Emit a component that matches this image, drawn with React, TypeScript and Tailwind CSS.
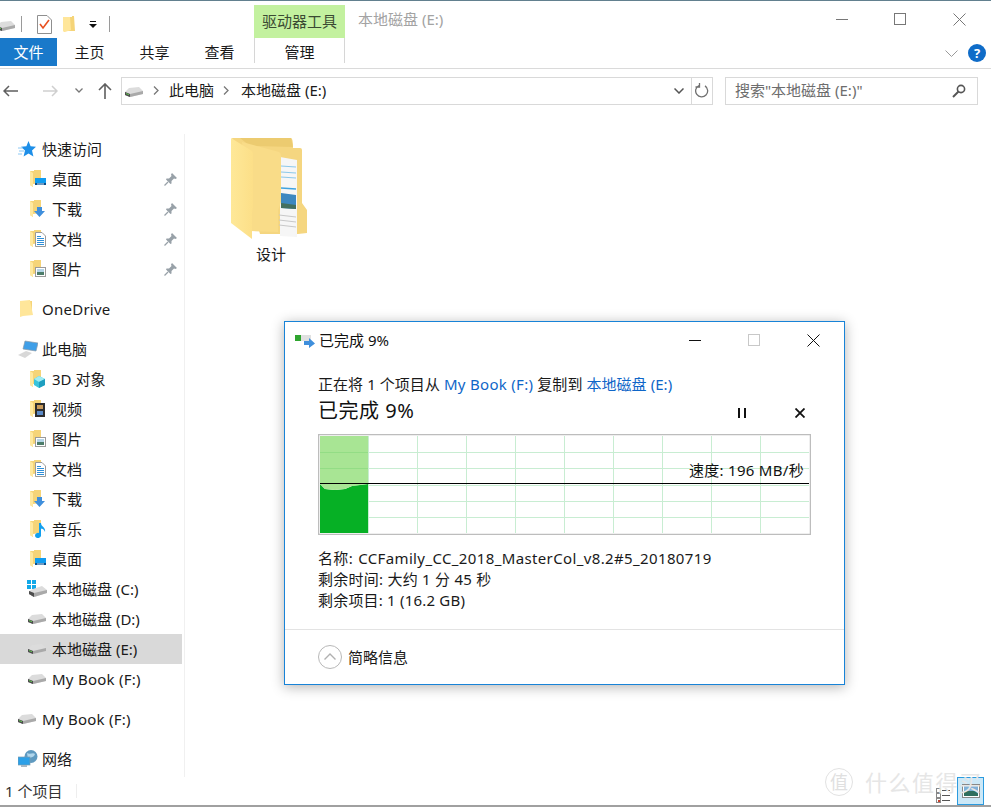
import React from "react";

const HDD = ({ className = "" }: { className?: string }) => (
  <svg width="18" height="12" viewBox="0 0 18 12" className={`shrink-0 ${className}`}>
    <path d="M4 2 L14 1 L18 5 L18 8 L5 11 L0 9 L0 6 Z" fill="#dcdcdc" />
    <path d="M0 6 L5 8 L18 5 L18 8 L5 11 L0 9 Z" fill="#a9a9a9" />
    <path d="M0 6 L5 8 L5 11 L0 9 Z" fill="#4d4d4d" />
    <path d="M1 7.5 L4 8.7" stroke="#5fbf4f" strokeWidth="1" />
  </svg>
);

const FolderBase = ({ children }: { children?: React.ReactNode }) => (
  <svg width="18" height="18" viewBox="0 0 18 18" className="shrink-0">
    <path d="M0 1 L4 1 L4 0 L11 0 L11 13 L3 14 L3 17 L0 15 Z" fill="#f5d478" />
    <path d="M0 1 L3 3 L3 17 L0 15 Z" fill="#ffe9a0" />
    {children}
  </svg>
);

const Desktop = () => (
  <FolderBase>
    <rect x="5" y="8" width="11" height="7" fill="#0f9cf0" />
    <rect x="5" y="13" width="11" height="2" fill="#0a4d8a" />
    <rect x="7" y="13.5" width="7" height="1" fill="#d0e8f8" />
  </FolderBase>
);
const Download = () => (
  <FolderBase>
    <path d="M7 7 H12 V11 H15 L9.5 17 L4 11 H7 Z" fill="#3f8fdc" />
  </FolderBase>
);
const Docs = () => (
  <FolderBase>
    <path d="M5.5 2.5 H12 L15.5 6 V16.5 H5.5 Z" fill="#fff" stroke="#9a9a9a" strokeWidth="1" />
    <path d="M7 6.5 H11 M7 8.5 H14 M7 10.5 H14 M7 12.5 H14 M7 14.5 H14" stroke="#2f8fd8" strokeWidth="1" />
  </FolderBase>
);
const Pics = () => (
  <FolderBase>
    <rect x="5.5" y="7.5" width="10" height="9" fill="#fff" stroke="#9a9a9a" />
    <rect x="7" y="9" width="7" height="3" fill="#b5d5e8" />
    <rect x="7" y="12" width="7" height="3" fill="#4d7d6a" />
  </FolderBase>
);
const Obj3D = () => (
  <FolderBase>
    <path d="M9 6 L15 9 L15 15 L9 18 L4 15 L4 9 Z" fill="#39c4dc" />
    <path d="M9 6 L15 9 L9 12 L4 9 Z" fill="#a0ecf4" />
    <path d="M9 12 L15 9 L15 15 L9 18 Z" fill="#1f9fc0" />
  </FolderBase>
);
const Video = () => (
  <FolderBase>
    <rect x="5" y="3" width="10" height="14" fill="#2d2d2d" />
    <rect x="7" y="5" width="6" height="4" fill="#c89a5a" />
    <rect x="7" y="11" width="6" height="4" fill="#5a8ac8" />
  </FolderBase>
);
const Music = () => (
  <FolderBase>
    <path d="M9 3 L11 3 C11 7 16 7 15 12 C14 9 12.5 9 11 8.5 L11 15 A3 2.6 0 1 1 9 13 Z" fill="#12a0ee" />
  </FolderBase>
);

const Pin = () => (
  <svg width="13" height="13" viewBox="0 0 13 13">
    <path d="M8 0 L13 5 L11.5 6 L10 5.5 L7.5 8 L7.5 10.5 L6.5 11 L2 6.5 L2.5 5.5 L5 5.5 L7.5 3 L7 1.5 Z" fill="#98a1a8" />
    <path d="M4 9 L0.5 12.5" stroke="#98a1a8" strokeWidth="1.3" />
  </svg>
);

const Star = () => (
  <svg width="18" height="17" viewBox="0 0 18 17">
    <path d="M10.5 0 L12.6 5.3 L18 5.8 L14 9.6 L15.4 15.5 L10.5 12.5 L5.6 15.5 L7 9.6 L3 5.8 L8.4 5.3 Z" fill="#1e8fe8" />
    <path d="M0 7 H5 M1 10 H6 M0 13 H4" stroke="#8cc8f4" strokeWidth="1" />
  </svg>
);
const OneDriveFolder = () => (
  <svg width="14" height="18" viewBox="0 0 14 18" className="ml-[2px] shrink-0">
    <path d="M2 1 L12 1 L12 14 L2 15 Z" fill="#f5d478" />
    <path d="M0 1 L10 0 L13 15 L3 16 L0 17 Z" fill="#ffe69a" />
  </svg>
);
const Computer = () => (
  <svg width="20" height="18" viewBox="0 0 20 18" className="shrink-0">
    <path d="M7 1 L20 3 L18 11 L5 9 Z" fill="#3f9fe8" stroke="#8a9aa8" strokeWidth="0.7" />
    <path d="M0 15 L8 11 L14 13 L7 18 Z" fill="#d8d8d8" />
  </svg>
);
const Network = () => (
  <svg width="20" height="18" viewBox="0 0 20 18" className="shrink-0">
    <circle cx="13" cy="6.5" r="6.5" fill="#5f9ac0" />
    <path d="M9 3 C12 5 15 2 17 4 C16 8 12 7 10 9 Z" fill="#b0d6ec" />
    <rect x="0" y="7" width="12" height="8" fill="#2ca0e8" stroke="#7a9ab0" strokeWidth="0.7" />
    <rect x="3" y="15" width="6" height="2" fill="#a8b8c4" />
  </svg>
);
const WinHDD = () => (
  <svg width="20" height="18" viewBox="0 0 20 18" className="-ml-[3px] shrink-0">
    <rect x="0" y="0" width="4" height="4" fill="#12a8e8" />
    <rect x="5" y="0" width="4" height="4" fill="#12a8e8" />
    <rect x="0" y="5" width="4" height="4" fill="#12a8e8" />
    <rect x="5" y="5" width="4" height="4" fill="#12a8e8" />
    <path d="M6 9 L15 6 L20 10 L20 13 L7 17 L2 14 L2 11 Z" fill="#dcdcdc" />
    <path d="M2 11 L7 13 L20 10 L20 13 L7 17 L2 14 Z" fill="#a9a9a9" />
    <path d="M2 11 L7 13 L7 17 L2 14 Z" fill="#4d4d4d" />
  </svg>
);

const Row = ({
  icon,
  label,
  pin,
  level = 1,
  selected,
  latin,
}: {
  icon: React.ReactNode;
  label: string;
  pin?: boolean;
  level?: 0 | 1;
  selected?: boolean;
  latin?: boolean;
}) => (
  <div className={`flex h-[30px] w-[182px] items-center ${selected ? "bg-[#d9d9d9]" : ""}`}>
    <div className={`flex shrink-0 items-center justify-start ${level === 1 ? "ml-[30px] w-[22px]" : "ml-[18px] w-[24px]"}`}>
      {icon}
    </div>
    <span className={`whitespace-nowrap text-[15px] text-[#1a1a1a] ${latin ? "tracking-[0.25px]" : ""}`}>{label}</span>
    {pin && (
      <span className="ml-auto mr-[5px]">
        <Pin />
      </span>
    )}
  </div>
);

const BigFolder = () => (
  <svg width="80" height="104" viewBox="231 136 80 104">
    <defs>
      <linearGradient id="leaf" x1="0" y1="0" x2="1" y2="0">
        <stop offset="0" stopColor="#fee898" />
        <stop offset="1" stopColor="#fcdf88" />
      </linearGradient>
    </defs>
    <path d="M232 138 H291 Q293 138 293 148 H300 Q302 148 302 150 V203 L307 210 V233 L298 234 H260 Z" fill="#f5d680" />
    <path d="M240 138 H291 L293 147 L250 146 Z" fill="#eccb70" />
    <path d="M280 157 L297 160 V237 L280 236 Z" fill="#f6f6f6" />
    <path d="M281 166 L296 167 M281 172 L296 173 M281 177 L296 178" stroke="#8cc8ea" strokeWidth="1" />
    <path d="M281 188 L296 189" stroke="#3fa3e0" strokeWidth="1.4" />
    <path d="M281 193 L296 195 V209 L281 208 Z" fill="#3d88c0" />
    <path d="M281 203 L296 205 V209 L281 208 Z" fill="#44705f" />
    <path d="M279 215 L296 217 M279 220 L296 222 M279 225 L296 227" stroke="#c8c8c8" strokeWidth="1" />
    <path d="M242 142 L279 152 Q281 153 281 156 V202 L278 210 V232 L250 231 Z" fill="#f9dc88" />
    <path d="M231 138 L252 151 Q253 152 253 154 V208 L252 213 V239 L231 223 Z" fill="url(#leaf)" />
  </svg>
);

const links = "text-[#0f66c8]";

const Chart = () => {
  const xs = [368, 417, 466, 515, 564, 613, 662, 711, 760];
  const ys = [452, 468, 485, 501, 517];
  return (
    <svg width="493" height="101" viewBox="318 434 493 101" className="block">
      <rect x="318.5" y="434.5" width="492" height="100" fill="#fff" stroke="#bdbdbd" strokeWidth="1.5" />
      <rect x="320" y="436" width="48.5" height="48" fill="#a8e594" />
      {ys.map((y) => (
        <line key={y} x1="320" x2="809" y1={y + 0.5} y2={y + 0.5} stroke="#c8edd2" />
      ))}
      {xs.map((x) => (
        <line key={x} x1={x + 0.5} x2={x + 0.5} y1="436" y2="533" stroke="#c8edd2" />
      ))}
      <line x1="320" x2="368" y1="452.5" y2="452.5" stroke="#93dd85" />
      <line x1="320" x2="368" y1="468.5" y2="468.5" stroke="#93dd85" />
      <path d="M320 484 L325 489 L335 490 L345 489 L352 486 L360 485 L368 484 V533 H320 Z" fill="#06b025" />
      <path d="M320 484 H368 L360 485 L352 486 L345 489 L335 490 L325 489 Z" fill="#a8e594" />
      <line x1="320" x2="809" y1="483.5" y2="483.5" stroke="#000" />
    </svg>
  );
};

const Dialog = () => (
  <div className="absolute left-[284px] top-[320px] h-[364px] w-[561px] border border-[#1883d7] bg-white shadow-[0_2px_12px_rgba(0,0,0,0.3)]">
    <div className="flex h-[36px] items-center">
      <svg width="20" height="14" viewBox="0 0 20 14" className="ml-[10px] mt-[1px]">
        <rect x="0" y="1" width="16" height="6" fill="#e0e0e0" />
        <rect x="0" y="1" width="6" height="6" fill="#2fa52f" />
        <path d="M9 7 H14 V4 L20 9.5 L14 14 V11 H9 Z" fill="#3f8fdc" />
      </svg>
      <span className="ml-[4px] text-[15px] text-[#111]">已完成 9%</span>
      <div className="ml-auto flex items-center">
        <span className="mr-[47px] h-px w-[12px] bg-[#111]" />
        <span className="mr-[47px] size-[12px] border border-[#c8c8c8]" />
        <svg width="13" height="13" viewBox="0 0 13 13" className="mr-[24px]">
          <path d="M0.5 0.5 L12.5 12.5 M12.5 0.5 L0.5 12.5" stroke="#111" />
        </svg>
      </div>
    </div>
    <div className="px-[33px]">
      <div className="mt-[15px] h-[22px] whitespace-nowrap text-[15px] leading-[22px] tracking-[0.06px] text-[#1a1a1a]">
        正在将 1 个项目从 <span className={`${links} tracking-[0.3px]`}>My Book (F:)</span> 复制到 <span className={links}>本地磁盘 (E:)</span>
      </div>
      <div className="mt-px flex h-[30px] items-center">
        <span className="text-[20px] tracking-[0.5px] text-[#111]">已完成 9%</span>
        <svg width="10" height="10" viewBox="0 0 10 10" className="ml-auto mt-[4px]">
          <path d="M2 0 V10 M8 0 V10" stroke="#111" strokeWidth="2" />
        </svg>
        <svg width="10" height="10" viewBox="0 0 10 10" className="ml-[48px] mr-[6px] mt-[4px]">
          <path d="M0.5 0.5 L9.5 9.5 M9.5 0.5 L0.5 9.5" stroke="#111" strokeWidth="1.8" />
        </svg>
      </div>
      <div className="relative mt-[8px]">
        <Chart />
        <span className="absolute right-[7px] top-[26px] whitespace-nowrap text-[15px] leading-[20px] tracking-[0.3px] text-[#111]">速度: 196 MB/秒</span>
      </div>
      <div className="mt-[13px] whitespace-nowrap text-[15px] leading-[21px] text-[#1a1a1a]">
        <div className="flex tracking-[0.37px]">
          <span>名称:</span>
          <span className="ml-[5px]">CCFamily_CC_2018_MasterCol_v8.2#5_20180719</span>
        </div>
        <div className="tracking-[0.25px]">剩余时间: 大约 1 分 45 秒</div>
        <div className="tracking-[0.2px]">剩余项目: 1 (16.2 GB)</div>
      </div>
    </div>
    <div className="mt-[18px] h-px bg-[#e3e3e3]" />
    <div className="flex h-[54px] items-center pl-[33px]">
      <svg width="24" height="24" viewBox="0 0 24 24">
        <circle cx="12" cy="12" r="11.5" fill="none" stroke="#b8b8b8" />
        <path d="M6.5 14.5 L12 9 L17.5 14.5" fill="none" stroke="#b0b0b0" strokeWidth="1.4" />
      </svg>
      <span className="ml-[6px] text-[15px] text-[#1a1a1a]">简略信息</span>
    </div>
  </div>
);

const Watermark = () => (
  <div className="absolute left-[825px] top-[766px] flex h-[30px] items-center">
    <span className="flex size-[28px] items-center justify-center rounded-full border border-[#e2e2e2] text-[18px] text-[#e0e0e0]">值</span>
    <span className="ml-[12px] whitespace-nowrap text-[22px] tracking-[1.5px] text-[#e6e6e6]">什么值得买</span>
  </div>
);

export default function App() {
  return (
    <div
      className="relative flex h-[807px] w-[991px] flex-col overflow-hidden border-t border-b-2 border-t-[#62808f] border-b-[#a0a0a0] bg-white text-[15px] text-[#1a1a1a]"
      style={{ fontFamily: '"Noto Sans","Noto Sans CJK SC",sans-serif' }}
    >
      {/* title bar */}
      <div className="flex h-[37px] items-start">
        <div className="flex h-[37px] w-[254px] items-center pt-[9px]">
          <HDD className="-ml-[3px] mt-[3px]" />
          <span className="ml-[6px] h-[16px] w-px bg-[#9a9a9a]" />
          <svg width="15" height="19" viewBox="0 0 15 19" className="ml-[15px]">
            <path d="M0.5 0.5 H10 L14.5 5 V18.5 H0.5 Z" fill="#fff" stroke="#8f8f8f" />
            <path d="M3 9 L6 13 L12 5" fill="none" stroke="#e8501f" strokeWidth="1.6" />
          </svg>
          <svg width="13" height="17" viewBox="0 0 13 17" className="ml-[11px]">
            <path d="M0 1 H9 V0 H11 L12 15 L2 15 L2 16 L0 15 Z" fill="#f5d478" />
            <path d="M0 1 H7 L8 14 L2 16 L0 15 Z" fill="#ffe69a" />
          </svg>
          <svg width="8" height="7" viewBox="0 0 8 7" className="ml-[13px]">
            <path d="M1 0 H7 V1 H1 Z M0 3 H8 L4 7 Z" fill="#111" />
          </svg>
          <span className="ml-[12px] h-[16px] w-px bg-[#9a9a9a]" />
        </div>
        <div className="mt-[4px] flex h-[33px] w-[91px] items-center justify-center bg-[#c3f19f] text-[15px] text-[#3b4a33]">
          驱动器工具
        </div>
        <span className="ml-[13px] mt-[7px] text-[15px] text-[#a3a3a3]">本地磁盘 (E:)</span>
        <div className="ml-auto mr-[25px] mt-[12px] flex items-start">
          <span className="mr-[46px] mt-[6px] h-px w-[12px] bg-[#777]" />
          <span className="mr-[47px] size-[12px] border border-[#777]" />
          <svg width="13" height="13" viewBox="0 0 13 13">
            <path d="M0.5 0.5 L12.5 12.5 M12.5 0.5 L0.5 12.5" stroke="#777" />
          </svg>
        </div>
      </div>
      {/* ribbon tabs */}
      <div className="flex h-[31px] items-start border-b border-[#dadada]">
        <div className="flex h-[28px] w-[57px] items-center justify-center bg-[#1979ca] pt-px text-white">文件</div>
        <div className="flex h-[28px] w-[65px] items-center justify-center pt-px">主页</div>
        <div className="flex h-[28px] w-[65px] items-center justify-center pt-px">共享</div>
        <div className="flex h-[28px] w-[65px] items-center justify-center pt-px">查看</div>
        <div className="ml-[2px] flex h-[25px] w-[91px] items-center justify-center border-x border-[#d6d6d6] pt-[4px]">管理</div>
        <div className="ml-auto mr-[5px] mt-[6px] flex items-center">
          <svg width="13" height="7" viewBox="0 0 13 7" className="mr-[10px]">
            <path d="M0.5 0.5 L6.5 6.5 L12.5 0.5" fill="none" stroke="#9a9a9a" />
          </svg>
          <span className="flex size-[18px] items-center justify-center rounded-full bg-[#0f6cc8] text-[13px] font-bold leading-none text-white">?</span>
        </div>
      </div>
      {/* address bar */}
      <div className="flex h-[37px] items-center pt-[6px]">
        <div className="flex w-[121px] items-center">
          <svg width="16" height="12" viewBox="0 0 16 12" className="ml-[3px]">
            <path d="M15 6 H1 M6 1 L1 6 L6 11" fill="none" stroke="#5f5f5f" strokeWidth="1.5" />
          </svg>
          <svg width="16" height="12" viewBox="0 0 16 12" className="ml-[23px]">
            <path d="M1 6 H15 M10 1 L15 6 L10 11" fill="none" stroke="#cfcfcf" strokeWidth="1.5" />
          </svg>
          <svg width="8" height="5" viewBox="0 0 8 5" className="ml-[17px]">
            <path d="M0.5 0.5 L4 4 L7.5 0.5" fill="none" stroke="#777" strokeWidth="1.3" />
          </svg>
          <svg width="14" height="16" viewBox="0 0 14 16" className="ml-[15px]">
            <path d="M7 16 V1 M1 7 L7 1 L13 7" fill="none" stroke="#5f5f5f" strokeWidth="1.6" />
          </svg>
        </div>
        <div className="flex h-[28px] w-[592px] items-center border border-[#d9d9d9]">
          <HDD className="ml-[3px] mt-[2px]" />
          <svg width="6" height="9" viewBox="0 0 6 9" className="ml-[10px]">
            <path d="M1 0.5 L5 4.5 L1 8.5" fill="none" stroke="#777" strokeWidth="1.3" />
          </svg>
          <span className="ml-[10px]">此电脑</span>
          <svg width="6" height="9" viewBox="0 0 6 9" className="ml-[9px]">
            <path d="M1 0.5 L5 4.5 L1 8.5" fill="none" stroke="#777" strokeWidth="1.3" />
          </svg>
          <span className="ml-[12px]">本地磁盘 (E:)</span>
          <svg width="10" height="6" viewBox="0 0 10 6" className="ml-auto mr-[7px]">
            <path d="M0.5 0.5 L5 5 L9.5 0.5" fill="none" stroke="#555" strokeWidth="1.5" />
          </svg>
          <div className="flex h-full w-[21px] items-center justify-center border-l border-[#d9d9d9]">
            <svg width="14" height="15" viewBox="0 0 14 15">
              <path d="M4 2.5 A6 6 0 1 0 10 2.9 M4.5 0 V4 H0.5" fill="none" stroke="#707070" strokeWidth="1.3" />
            </svg>
          </div>
        </div>
        <div className="ml-[12px] flex h-[28px] w-[253px] items-center border border-[#d9d9d9] pl-[9px] text-[#6d6d6d]">
          搜索"本地磁盘 (E:)"
          <svg width="14" height="14" viewBox="0 0 14 14" className="ml-auto mr-[11px]">
            <circle cx="9" cy="5" r="3.6" fill="none" stroke="#555" strokeWidth="1.6" />
            <path d="M6.5 7.5 L1 13" stroke="#555" strokeWidth="2" />
          </svg>
        </div>
      </div>
      {/* body */}
      <div className="flex min-h-0 flex-1 pt-[28px]">
        <nav className="h-[643px] w-[185px] shrink-0 border-r border-[#f0f0f0]">
          <Row level={0} icon={<Star />} label="快速访问" />
          <Row icon={<Desktop />} label="桌面" pin />
          <Row icon={<Download />} label="下载" pin />
          <Row icon={<Docs />} label="文档" pin />
          <Row icon={<Pics />} label="图片" pin />
          <div className="h-[10px]" />
          <Row level={0} icon={<OneDriveFolder />} label="OneDrive" latin />
          <div className="h-[10px]" />
          <Row level={0} icon={<Computer />} label="此电脑" />
          <Row icon={<Obj3D />} label="3D 对象" />
          <Row icon={<Video />} label="视频" />
          <Row icon={<Pics />} label="图片" />
          <Row icon={<Docs />} label="文档" />
          <Row icon={<Download />} label="下载" />
          <Row icon={<Music />} label="音乐" />
          <Row icon={<Desktop />} label="桌面" />
          <Row icon={<WinHDD />} label="本地磁盘 (C:)" />
          <Row icon={<HDD className="-ml-[2px]" />} label="本地磁盘 (D:)" />
          <Row selected icon={<HDD className="-ml-[2px]" />} label="本地磁盘 (E:)" />
          <Row icon={<HDD className="-ml-[2px]" />} label="My Book (F:)" latin />
          <div className="h-[10px]" />
          <Row level={0} icon={<HDD />} label="My Book (F:)" latin />
          <div className="h-[10px]" />
          <Row level={0} icon={<Network />} label="网络" />
        </nav>
        <main className="min-w-0 flex-1">
          <div className="ml-[41px] flex w-[90px] flex-col items-center pt-[2px]">
            <BigFolder />
            <span className="mt-[3px] text-[15px] leading-[22px]">设计</span>
          </div>
        </main>
      </div>
      {/* status bar */}
      <div className="absolute bottom-0 left-0 flex h-[28px] w-full items-center">
        <span className="ml-[5px] text-[15px] text-[#333]">1 个项目</span>
        <span className="ml-[14px] h-[14px] w-px bg-[#eeeeee]" />
        <div className="ml-auto mr-[7px] flex items-center">
          <svg width="14" height="16" viewBox="0 0 14 16" className="mr-[7px] mt-[10px]">
            <rect x="0.5" y="0.5" width="4" height="4" fill="#fff" stroke="#888" />
            <rect x="0.5" y="5.5" width="4" height="4" fill="#fff" stroke="#888" />
            <rect x="0.5" y="10.5" width="4" height="4" fill="#fff" stroke="#888" />
            <rect x="2" y="12" width="2" height="2" fill="#c8402a" />
            <path d="M6 2.5 H14 M6 7.5 H14 M6 12.5 H14" stroke="#555" />
          </svg>
          <span className="flex h-[28px] w-[27px] items-center justify-center border border-[#2b9bdf] bg-[#cce8f7]">
            <svg width="18" height="14" viewBox="0 0 18 14">
              <rect x="0.5" y="0.5" width="17" height="13" fill="#fff" stroke="#888" />
              <rect x="2" y="2" width="14" height="5" fill="#7fb0d8" />
              <rect x="2" y="7" width="14" height="5" fill="#2f6f5f" />
            </svg>
          </span>
        </div>
      </div>
      <Watermark />
      <Dialog />
    </div>
  );
}
